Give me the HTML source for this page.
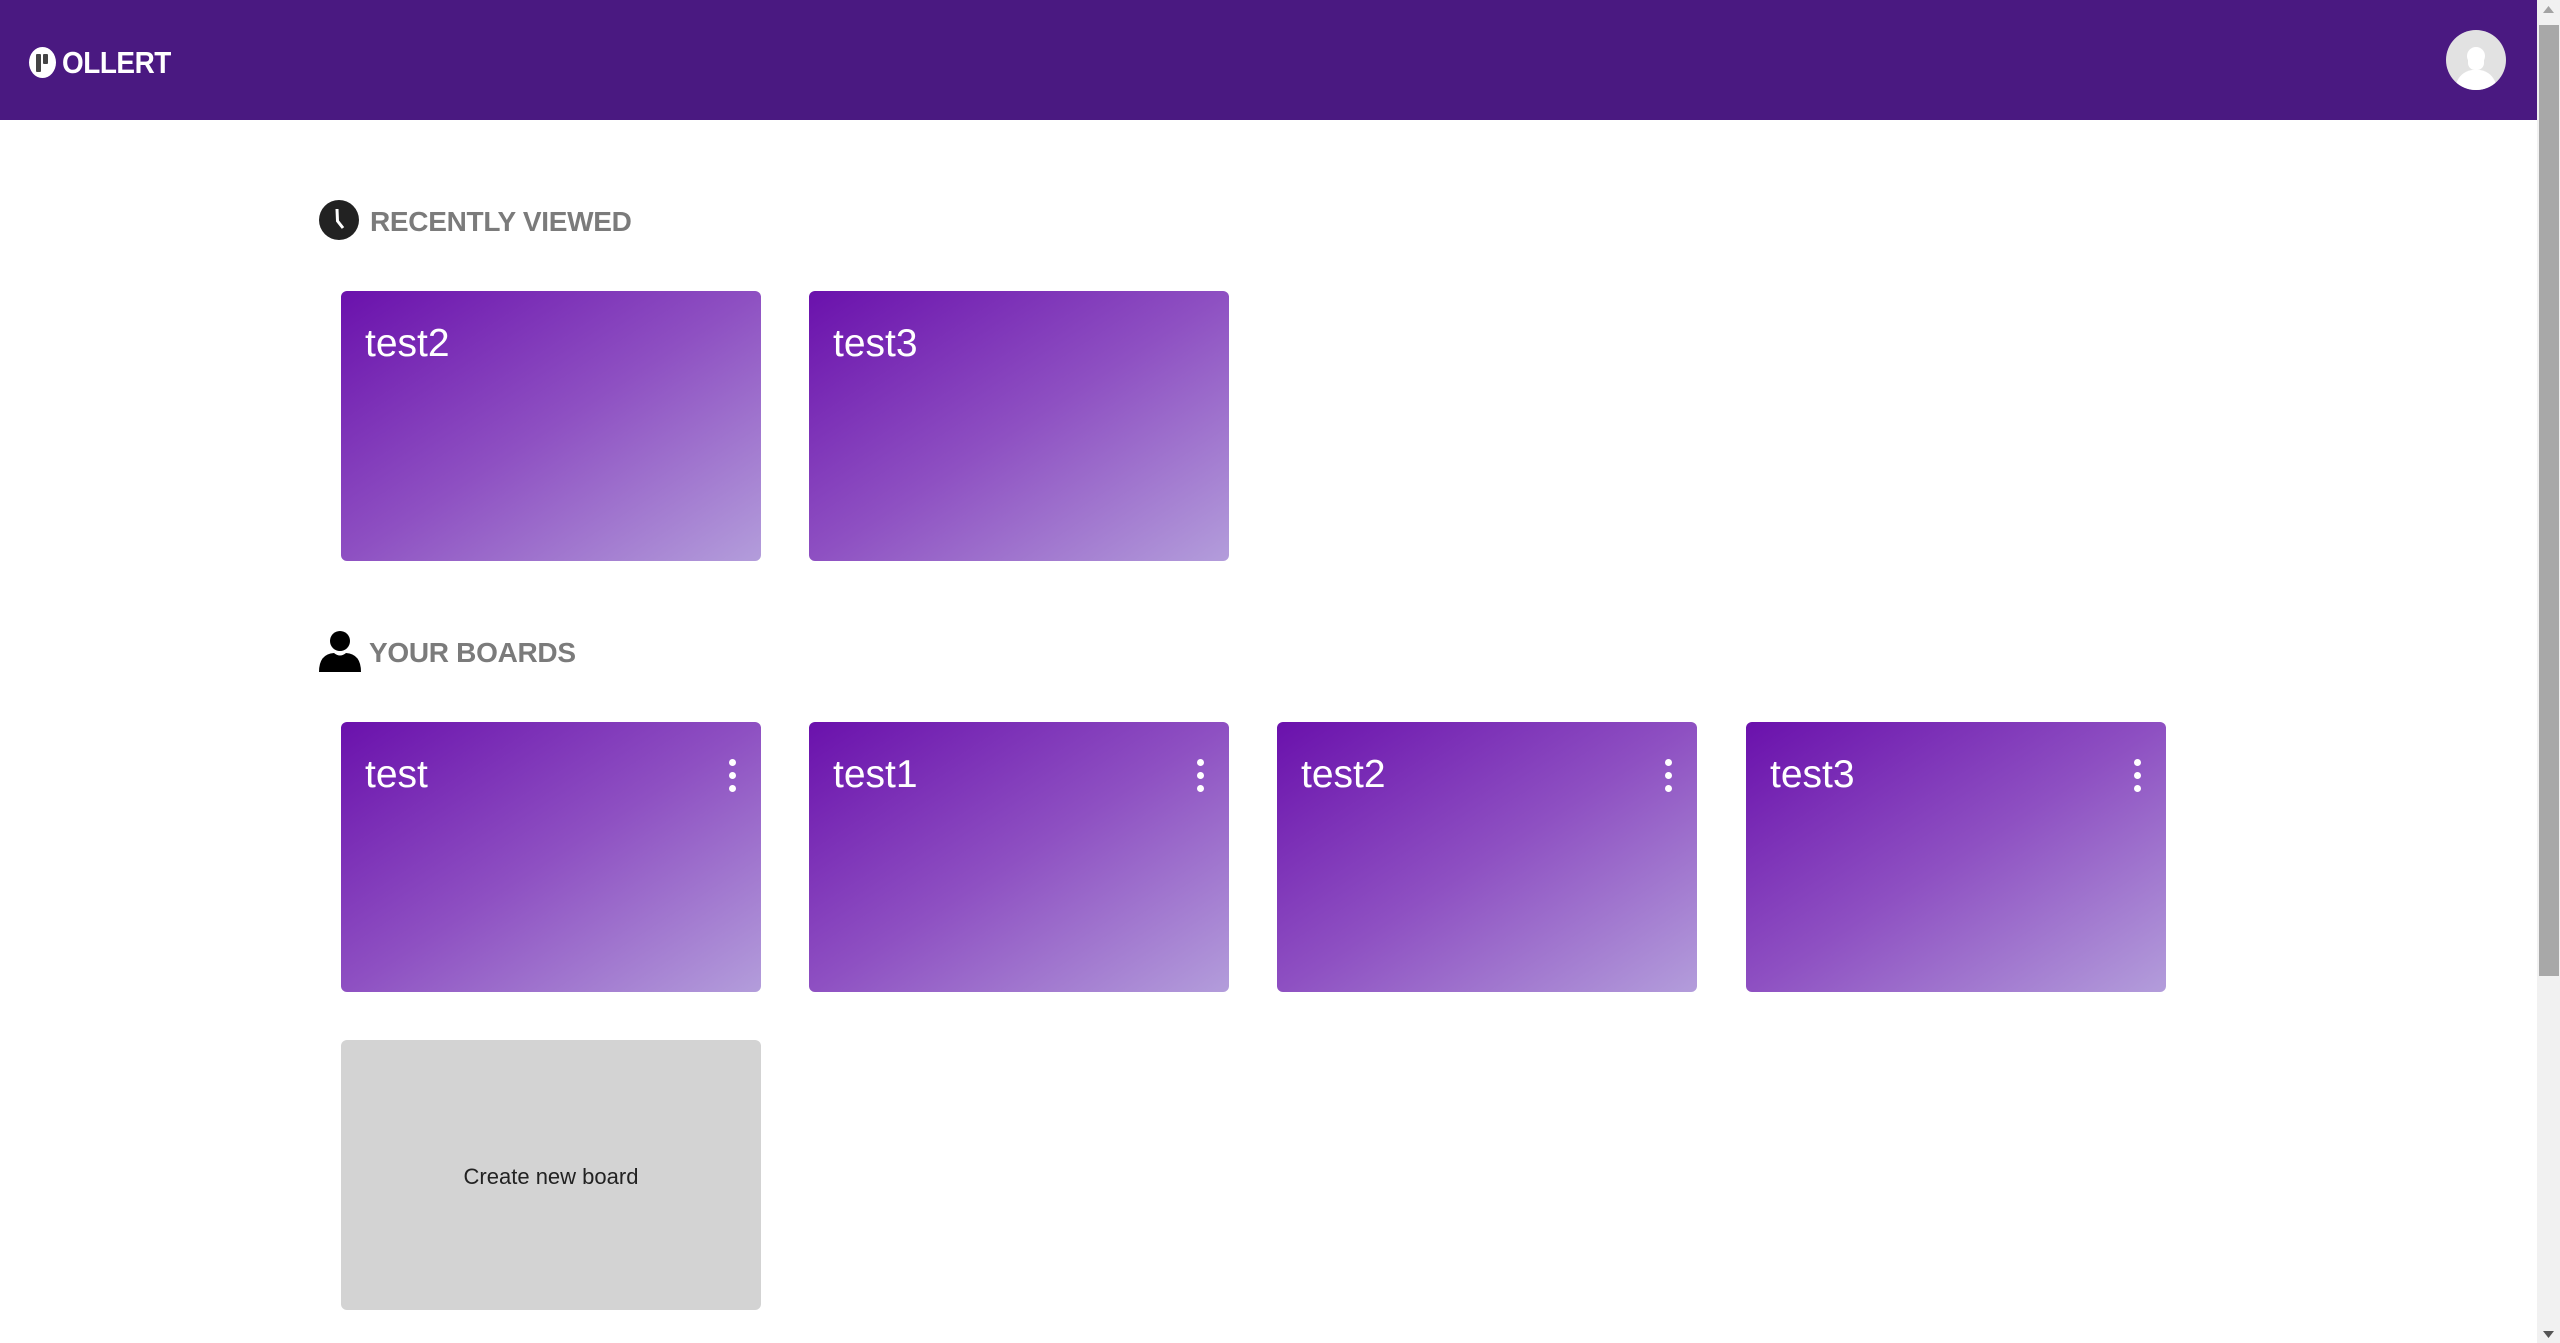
<!DOCTYPE html>
<html><head><meta charset="utf-8"><style>
html,body{margin:0;padding:0;width:2560px;height:1343px;overflow:hidden;background:#fff;font-family:"Liberation Sans",sans-serif;position:relative}
.hdr{position:absolute;left:0;top:0;width:2537px;height:120px;background:#4a1981}
.logo-i{position:absolute;left:29px;top:47px;width:27px;height:31px;border-radius:50%;background:#fff}
.logo-i:before{content:"";position:absolute;left:7px;top:7px;width:5px;height:18px;background:#444;border-radius:1px}
.logo-i:after{content:"";position:absolute;left:14px;top:7px;width:5px;height:10px;background:#444;border-radius:1px}
.logo-t{position:absolute;left:62px;top:45px;font-size:31px;font-weight:bold;color:#fff;letter-spacing:-0.5px;transform:scaleX(.9);transform-origin:left top;line-height:36px}
.av{position:absolute;left:2446px;top:30px;width:60px;height:60px;border-radius:50%;background:#e2e2e2;overflow:hidden}
.sb{position:absolute;left:2537px;top:0;width:23px;height:1343px;background:#f1f1f1}
.th{position:absolute;left:2px;top:25px;width:20px;height:951px;background:#a8a8a8}
.h{position:absolute;font-size:28px;font-weight:bold;color:#7b7b7b;line-height:34px;letter-spacing:-0.3px}
.card{position:absolute;width:420px;height:270px;border-radius:6px;background:linear-gradient(to bottom right,#6a11ac,#8e50c2 50%,#b39ddb)}
.card span{position:absolute;left:24px;top:30px;font-size:39px;color:#fff;line-height:46px}
.dots{position:absolute;right:24px;top:37px;width:8px}
.dots i{display:block;width:7px;height:7px;border-radius:50%;background:#fff;margin-bottom:6px}
.new{position:absolute;left:341px;top:1040px;width:420px;height:270px;border-radius:6px;background:#d3d3d3;display:flex;align-items:center;justify-content:center;font-size:22px;color:#222;padding-top:4px;box-sizing:border-box}
</style></head><body>
<div class="hdr">
<div class="logo-i"></div><div class="logo-t">OLLERT</div>
<div class="av"><svg width="60" height="60"><circle cx="30" cy="26" r="9" fill="#fff"/><rect x="22" y="22" width="16" height="18" rx="7" fill="#fff"/><path d="M10 54 Q14 42 26 40 L34 40 Q46 42 50 54 L50 60 L10 60Z" fill="#fff"/></svg></div>
</div>
<div class="sb"><div class="th"></div>
<svg style="position:absolute;left:6px;top:6px" width="11" height="7"><path d="M0 7L5.5 0L11 7Z" fill="#a3a3a3"/></svg>
<svg style="position:absolute;left:6px;top:1331px" width="11" height="7"><path d="M0 0L5.5 7L11 0Z" fill="#555"/></svg></div>

<svg style="position:absolute;left:319px;top:200px" width="40" height="40"><ellipse cx="20" cy="20" rx="20" ry="20" fill="#222"/><path d="M18 9 L18.5 21 L24 28" stroke="#fff" stroke-width="3" fill="none"/></svg>
<div class="h" style="left:370px;top:205px">RECENTLY VIEWED</div>

<div class="card" style="left:341px;top:291px"><span>test2</span></div>
<div class="card" style="left:809px;top:291px"><span>test3</span></div>

<svg style="position:absolute;left:318px;top:630px" width="44" height="44"><circle cx="22" cy="11" r="10" fill="#000"/><path d="M1 42 Q1 24 16 23 Q22 28 28 23 Q43 24 43 42Z" fill="#000"/></svg>
<div class="h" style="left:369px;top:636px">YOUR BOARDS</div>

<div class="card" style="left:341px;top:722px"><span>test</span><div class="dots"><i></i><i></i><i></i></div></div>
<div class="card" style="left:809px;top:722px"><span>test1</span><div class="dots"><i></i><i></i><i></i></div></div>
<div class="card" style="left:1277px;top:722px"><span>test2</span><div class="dots"><i></i><i></i><i></i></div></div>
<div class="card" style="left:1746px;top:722px"><span>test3</span><div class="dots"><i></i><i></i><i></i></div></div>

<div class="new">Create new board</div>
</body></html>
